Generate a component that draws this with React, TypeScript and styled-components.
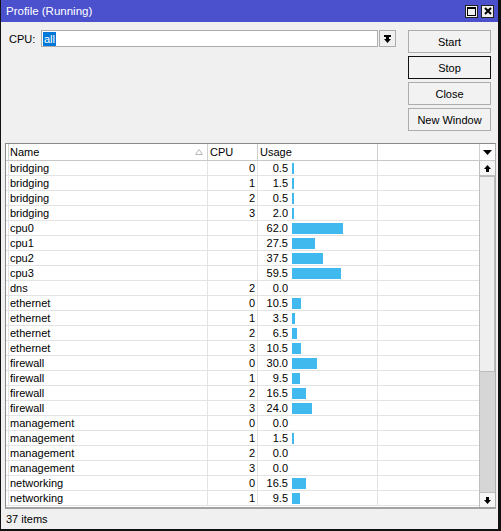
import styled, { createGlobalStyle } from "styled-components";

const GlobalStyle = createGlobalStyle`
  html, body {
    margin: 0;
    padding: 0;
    background: #f0f0f0;
  }
  body {
    font-family: "Liberation Sans", Arial, sans-serif;
    font-size: 11px;
    color: #000;
  }
`;

const Window = styled.div`
  width: 501px;
  height: 531px;
  box-sizing: border-box;
  border-left: 1px solid #111;
  border-right: 3px solid #111;
  border-bottom: 2px solid #111;
  background: #f0f0f0;
  display: flex;
  flex-direction: column;
  overflow: hidden;
`;

const TitleBar = styled.div`
  height: 22px;
  flex: none;
  display: flex;
  align-items: center;
  padding: 0 4px 0 5px;
  background: #4b50cd;
  color: #fff;
  font-size: 11.5px;
`;

const TitleButtons = styled.div`
  margin-left: auto;
  display: flex;
  gap: 3px;
`;

const TitleButton = styled.div`
  width: 13px;
  height: 13px;
  box-sizing: border-box;
  border: 1px solid #222;
  background: #f0f0f0;
  display: flex;
  align-items: center;
  justify-content: center;
`;

const TopPanel = styled.div`
  height: 121px;
  flex: none;
  box-sizing: border-box;
  display: flex;
  padding: 8px 7px 0 8px;
`;

const FieldRow = styled.div`
  display: flex;
  align-items: center;
  height: 17px;
`;

const Label = styled.span`
  width: 32px;
`;

const Input = styled.div`
  width: 337px;
  height: 17px;
  box-sizing: border-box;
  border: 1px solid #acacac;
  background: #fff;
  display: flex;
  align-items: center;
  padding-left: 1px;
`;

const Selected = styled.span`
  background: #0078d7;
  color: #fff;
  padding: 0 1px;
  line-height: 14px;
`;

const DropButton = styled.div`
  width: 17px;
  height: 17px;
  margin-left: 1px;
  box-sizing: border-box;
  border: 1px solid #acacac;
  background: #f0f0f0;
  display: flex;
  align-items: center;
  justify-content: center;
`;

const ButtonColumn = styled.div`
  margin-left: auto;
  width: 83px;
  display: flex;
  flex-direction: column;
  gap: 3px;
`;

const Button = styled.div<{ $focused?: boolean }>`
  height: 23px;
  box-sizing: border-box;
  border: 1px solid ${(p) => (p.$focused ? "#111" : "#adadad")};
  background: #f2f2f2;
  display: flex;
  align-items: center;
  justify-content: center;
`;

const TableFrame = styled.div`
  height: 366px;
  flex: none;
  margin: 0 2px 0 4px;
  box-sizing: border-box;
  border: 1px solid #8a8a8a;
  border-right-color: #b0b0b0;
  border-bottom: 2px solid #a3a3a3;
  background: #fff;
  display: flex;
  flex-direction: column;
`;

const columns = "2px 200px 50px 120px 102px";

const HeaderRow = styled.div`
  height: 17px;
  flex: none;
  box-sizing: border-box;
  display: grid;
  grid-template-columns: ${columns} 15px;
  border-bottom: 1px solid #c8c8c8;
`;

const HeaderCell = styled.div`
  display: flex;
  align-items: center;
  padding-left: 2px;
  border-right: 1px solid #d0d0d0;
  overflow: hidden;
  white-space: nowrap;
`;

const SortMark = styled.span`
  margin-left: auto;
  margin-right: 4px;
  display: flex;
`;

const HeaderMenu = styled.div`
  display: flex;
  align-items: center;
  justify-content: center;
`;

const Body = styled.div`
  flex: 1;
  min-height: 0;
  display: flex;
`;

const Rows = styled.div`
  flex: 1;
  overflow: hidden;
`;

const Row = styled.div`
  height: 15px;
  box-sizing: border-box;
  display: grid;
  grid-template-columns: ${columns};
  border-bottom: 1px solid #e3e3e3;
`;

const Cell = styled.div<{ $right?: boolean }>`
  display: flex;
  align-items: center;
  justify-content: ${(p) => (p.$right ? "flex-end" : "flex-start")};
  padding: ${(p) => (p.$right ? "0 2px 0 0" : "0 0 0 2px")};
  border-right: 1px solid #e3e3e3;
  white-space: nowrap;
  overflow: hidden;
`;

const UsageValue = styled.span`
  width: 28px;
  text-align: right;
  flex: none;
`;

const Bar = styled.span`
  height: 11px;
  margin-left: 4px;
  background: #40baee;
  flex: none;
`;

const ScrollBar = styled.div`
  width: 15px;
  flex: none;
  border-left: 1px solid #bdbdbd;
  display: flex;
  flex-direction: column;
  background: #d6d6d6;
`;

const ScrollArrow = styled.div`
  height: 15px;
  flex: none;
  box-sizing: border-box;
  background: #f6f6f6;
  border-bottom: 1px solid #bdbdbd;
  display: flex;
  align-items: center;
  justify-content: center;
`;

const ScrollThumb = styled.div`
  height: 196px;
  flex: none;
  box-sizing: border-box;
  background: #efefef;
  border: 1px solid #bdbdbd;
  border-left: none;
`;

const ScrollTrack = styled.div`
  flex: 1;
`;

const DownArrow = styled(ScrollArrow)`
  border-bottom: none;
  border-top: 1px solid #bdbdbd;
`;

const StatusBar = styled.div`
  flex: 1;
  display: flex;
  align-items: center;
  padding-left: 5px;
`;

type Entry = { name: string; cpu: string; usage: number };

const data: Entry[] = [
  { name: "bridging", cpu: "0", usage: 0.5 },
  { name: "bridging", cpu: "1", usage: 1.5 },
  { name: "bridging", cpu: "2", usage: 0.5 },
  { name: "bridging", cpu: "3", usage: 2.0 },
  { name: "cpu0", cpu: "", usage: 62.0 },
  { name: "cpu1", cpu: "", usage: 27.5 },
  { name: "cpu2", cpu: "", usage: 37.5 },
  { name: "cpu3", cpu: "", usage: 59.5 },
  { name: "dns", cpu: "2", usage: 0.0 },
  { name: "ethernet", cpu: "0", usage: 10.5 },
  { name: "ethernet", cpu: "1", usage: 3.5 },
  { name: "ethernet", cpu: "2", usage: 6.5 },
  { name: "ethernet", cpu: "3", usage: 10.5 },
  { name: "firewall", cpu: "0", usage: 30.0 },
  { name: "firewall", cpu: "1", usage: 9.5 },
  { name: "firewall", cpu: "2", usage: 16.5 },
  { name: "firewall", cpu: "3", usage: 24.0 },
  { name: "management", cpu: "0", usage: 0.0 },
  { name: "management", cpu: "1", usage: 1.5 },
  { name: "management", cpu: "2", usage: 0.0 },
  { name: "management", cpu: "3", usage: 0.0 },
  { name: "networking", cpu: "0", usage: 16.5 },
  { name: "networking", cpu: "1", usage: 9.5 },
];

// the list holds 37 entries; only the rows that fit are rendered
const totalItems = 37;

const barWidth = (v: number) => (v <= 0 ? 0 : Math.max(2, Math.round(v * 0.82)));

const MaxIcon = () => (
  <svg width="9" height="9" viewBox="0 0 9 9">
    <rect x="0.5" y="0.5" width="8" height="8" fill="none" stroke="#000" />
    <rect x="0" y="0" width="9" height="2" fill="#000" />
  </svg>
);

const CloseIcon = () => (
  <svg width="8" height="8" viewBox="0 0 8 8">
    <path d="M1 1L7 7M7 1L1 7" stroke="#000" strokeWidth="2" />
  </svg>
);

const DropIcon = () => (
  <svg width="7" height="8" viewBox="0 0 7 8">
    <rect x="0" y="0" width="7" height="2" fill="#000" />
    <rect x="2" y="2" width="3" height="2" fill="#000" />
    <polygon points="0,4 7,4 3.5,8" fill="#000" />
  </svg>
);

const SortIcon = () => (
  <svg width="8" height="6" viewBox="0 0 8 6">
    <polygon points="4,0.5 7.5,5.5 0.5,5.5" fill="none" stroke="#b8b8b8" />
  </svg>
);

const MenuIcon = () => (
  <svg width="9" height="5" viewBox="0 0 9 5">
    <polygon points="0,0 9,0 4.5,5" fill="#000" />
  </svg>
);

const ArrowIcon = ({ up }: { up?: boolean }) => (
  <svg width="7" height="7" viewBox="0 0 7 7" style={{ transform: up ? "none" : "rotate(180deg)" }}>
    <polygon points="3.5,0 7,4 0,4" fill="#000" />
    <rect x="2" y="4" width="3" height="3" fill="#000" />
  </svg>
);

export default function App() {
  return (
    <>
      <GlobalStyle />
      <Window>
        <TitleBar>
          Profile (Running)
          <TitleButtons>
            <TitleButton>
              <MaxIcon />
            </TitleButton>
            <TitleButton>
              <CloseIcon />
            </TitleButton>
          </TitleButtons>
        </TitleBar>
        <TopPanel>
          <FieldRow>
            <Label>CPU:</Label>
            <Input>
              <Selected>all</Selected>
            </Input>
            <DropButton>
              <DropIcon />
            </DropButton>
          </FieldRow>
          <ButtonColumn>
            <Button>Start</Button>
            <Button $focused>Stop</Button>
            <Button>Close</Button>
            <Button>New Window</Button>
          </ButtonColumn>
        </TopPanel>
        <TableFrame>
          <HeaderRow>
            <HeaderCell />
            <HeaderCell>
              Name
              <SortMark>
                <SortIcon />
              </SortMark>
            </HeaderCell>
            <HeaderCell>CPU</HeaderCell>
            <HeaderCell>Usage</HeaderCell>
            <HeaderCell />
            <HeaderMenu>
              <MenuIcon />
            </HeaderMenu>
          </HeaderRow>
          <Body>
            <Rows>
              {data.map((d, i) => (
                <Row key={i}>
                  <Cell />
                  <Cell>{d.name}</Cell>
                  <Cell $right>{d.cpu}</Cell>
                  <Cell>
                    <UsageValue>{d.usage.toFixed(1)}</UsageValue>
                    {d.usage > 0 && <Bar style={{ width: barWidth(d.usage) }} />}
                  </Cell>
                  <Cell />
                </Row>
              ))}
            </Rows>
            <ScrollBar>
              <ScrollArrow>
                <ArrowIcon up />
              </ScrollArrow>
              <ScrollThumb />
              <ScrollTrack />
              <DownArrow>
                <ArrowIcon />
              </DownArrow>
            </ScrollBar>
          </Body>
        </TableFrame>
        <StatusBar>{totalItems} items</StatusBar>
      </Window>
    </>
  );
}
